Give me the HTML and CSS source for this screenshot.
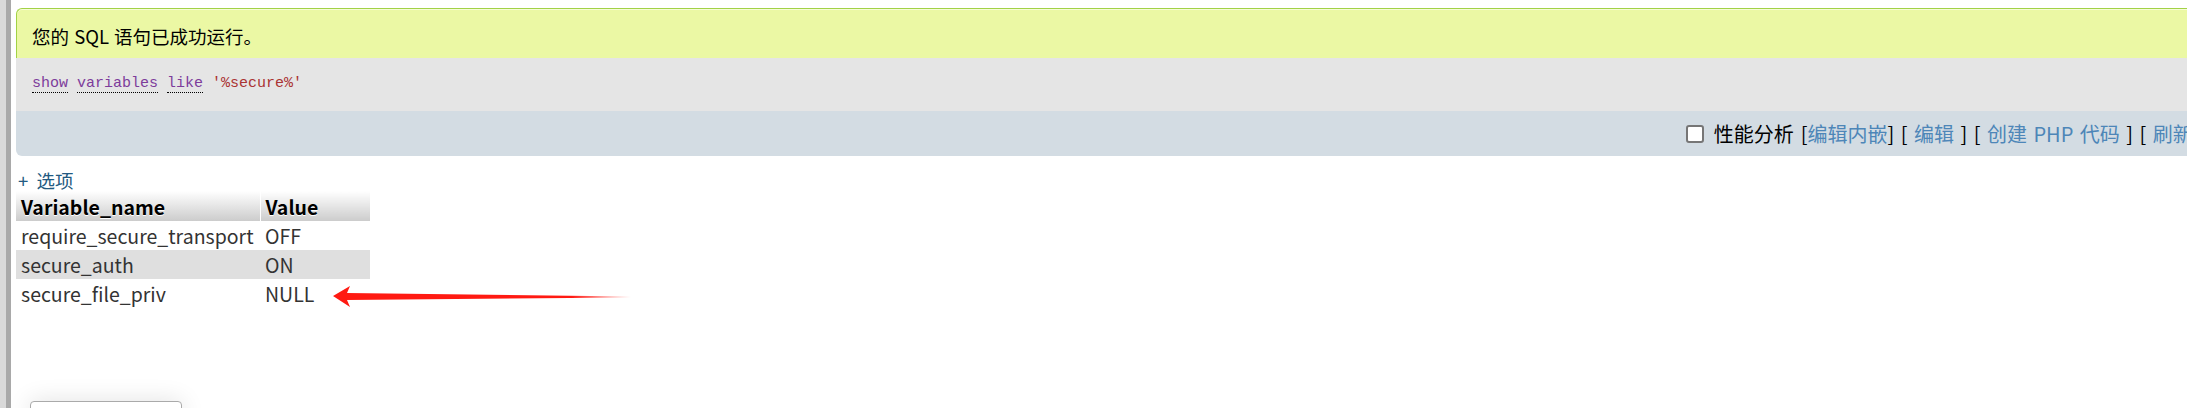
FILE: index.html
```html
<!DOCTYPE html>
<html lang="zh">
<head>
<meta charset="utf-8">
<title>SQL</title>
<link rel="stylesheet" href="styles.css">
</head>
<body>
<div class="page">
  <div class="sidebar"></div>
  <div class="main">
    <div class="result">
      <div class="success">您的 SQL 语句已成功运行。</div>
      <div class="sql"><span class="kw">show</span> <span class="kw">variables</span> <span class="kw">like</span> <span class="str">'%secure%'</span></div>
      <div class="toolbar">
        <label class="prof"><span class="check"></span>性能分析</label>
        <span class="links">[<a>编辑内嵌</a>] [ <a>编辑</a> ] [ <a>创建 PHP 代码</a> ] [ <a>刷新</a> ]</span>
      </div>
    </div>
    <div class="options"><a>+ 选项</a></div>
    <table class="data">
      <colgroup><col class="w1"><col class="w2"></colgroup>
      <thead>
        <tr><th class="c1">Variable_name</th><th class="c2">Value</th></tr>
      </thead>
      <tbody>
        <tr><td>require_secure_transport</td><td>OFF</td></tr>
        <tr class="even"><td>secure_auth</td><td>ON</td></tr>
        <tr><td>secure_file_priv</td><td>NULL</td></tr>
      </tbody>
    </table>
  </div>
</div>
<svg class="arrow" width="310" height="30" viewBox="0 0 310 30">
  <defs>
    <linearGradient id="fade" x1="0" y1="0" x2="1" y2="0">
      <stop offset="0" stop-color="#ff1a12"/>
      <stop offset="0.8" stop-color="#ff1a12"/>
      <stop offset="1" stop-color="#ff1a12" stop-opacity="0"/>
    </linearGradient>
  </defs>
  <path d="M2 12 L19 2 L16 9 L300 12.5 L300 13.5 L16 16 L19 23 Z" fill="url(#fade)"/>
</svg>
<div class="console"></div>
</body>
</html>
```

FILE: styles.css
```css
html, body {
  margin: 0;
  padding: 0;
  background: #fff;
  overflow: hidden;
  width: 2187px;
  height: 408px;
  font-family: "Noto Sans CJK SC", "Noto Sans", sans-serif;
  color: #333;
}

.page {
  display: flex;
  height: 408px;
}

.sidebar {
  width: 6px;
  flex: none;
  background: #d9d9d9;
  border-right: 5px solid #a9a9a9;
}

.main {
  padding: 8px 0 0 5px;
}

.result {
  width: 2200px;
}

.success {
  height: 50px;
  box-sizing: border-box;
  background: #ebf8a4;
  border-top: 1px solid #a2d246;
  border-left: 1px solid #a2d246;
  border-radius: 6px 0 0 0;
  box-shadow: inset 0 1px 0 #f7fcd7;
  padding: 17px 0 0 15px;
  font-size: 18.5px;
  line-height: 21px;
  word-spacing: 1px;
  color: #000;
}

.sql {
  height: 53px;
  box-sizing: border-box;
  background: #e5e5e5;
  padding: 17px 0 0 16px;
  font-family: "Liberation Mono", monospace;
  font-size: 15px;
  line-height: 18px;
  color: #444;
}

.kw {
  color: #7d3c9b;
  border-bottom: 1px dotted #000;
}

.str {
  color: #a33;
}

.toolbar {
  height: 45px;
  box-sizing: border-box;
  background: #d3dce3;
  border-radius: 0 0 0 6px;
  display: flex;
  justify-content: flex-end;
  align-items: center;
  padding-right: 10px;
  font-size: 20px;
  word-spacing: 2px;
  color: #000;
}

.prof {
  display: flex;
  align-items: center;
}

.check {
  width: 14px;
  height: 14px;
  border: 2px solid #767676;
  border-radius: 3px;
  background: #fff;
  margin-right: 10px;
}

.links {
  margin-left: 7px;
}

.links a {
  color: #4d86b8;
}

.options {
  margin-top: 13px;
  padding-left: 2px;
  font-size: 18.5px;
  line-height: 22px;
  word-spacing: 4px;
}

.options a {
  color: #235a81;
}

.data {
  border-collapse: collapse;
  table-layout: fixed;
  width: 354px;
  font-size: 19.5px;
}

.data col.w1 {
  width: 244px;
}

.data col.w2 {
  width: 110px;
}

.data th {
  height: 30px;
  padding: 0 5px;
  text-align: left;
  font-weight: bold;
  color: #000;
  text-shadow: 0 1px 0 #fff;
  background: linear-gradient(#fff, #ccc);
}

.data th.c1 {
  border-right: 1px solid #fff;
}

.data td {
  height: 29px;
  padding: 0 5px;
  color: #333;
  white-space: nowrap;
  overflow: hidden;
}

.data tr.even td {
  background: #dfdfdf;
}

.arrow {
  position: absolute;
  left: 331px;
  top: 284px;
}

.console {
  position: absolute;
  left: 30px;
  top: 401px;
  width: 150px;
  height: 20px;
  border: 1px solid #aaa;
  border-radius: 4px;
  background: #fff;
  box-shadow: 0 0 24px rgba(0, 0, 0, 0.12);
}
```
